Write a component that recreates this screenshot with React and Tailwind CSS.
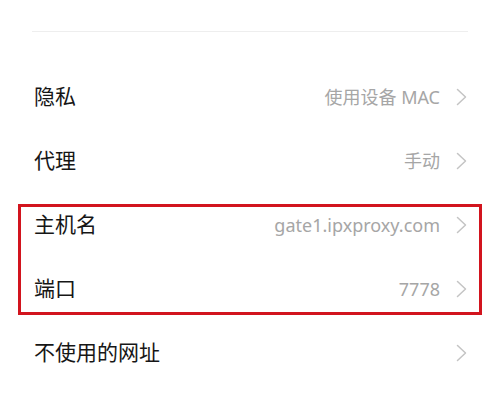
import React from "react";

const rows = [
  { label: "隐私", value: "使用设备 MAC" },
  { label: "代理", value: "手动" },
  { label: "主机名", value: "gate1.ipxproxy.com" },
  { label: "端口", value: "7778" },
  { label: "不使用的网址", value: "" },
];

const Chevron = () => (
  <svg width="11" height="18" viewBox="0 0 11 18" fill="none" className="shrink-0">
    <path d="M1.5 1.5 L9.5 9 L1.5 16.5" stroke="#c4c4c4" strokeWidth="1.5" strokeLinecap="round" strokeLinejoin="round" />
  </svg>
);

const Row = ({ label, value }) => (
  <div className="h-[64px] flex items-center justify-between pl-[34px] pr-[33px]">
    <span className="text-[21px] text-[#161616]">{label}</span>
    <div className="flex items-center gap-[16px]">
      {value && <span className="text-[18px] text-[#a6a6a6]">{value}</span>}
      <Chevron />
    </div>
  </div>
);

export default function App() {
  return (
    <div
      className="w-[500px] h-[400px] bg-white overflow-hidden"
      style={{ fontFamily: '"Noto Sans", "Noto Sans CJK SC", sans-serif' }}
    >
      <div className="h-[31px]" />
      <div className="mx-[32px] h-px bg-[#eeeeee]" />
      <div className="h-[33px]" />
      <Row {...rows[0]} />
      <Row {...rows[1]} />
      <div className="relative">
        <Row {...rows[2]} />
        <Row {...rows[3]} />
        <div className="absolute left-[18px] right-[18px] top-[11px] bottom-[6px] border-[3px] border-[#d2141e]" />
      </div>
      <Row {...rows[4]} />
    </div>
  );
}
